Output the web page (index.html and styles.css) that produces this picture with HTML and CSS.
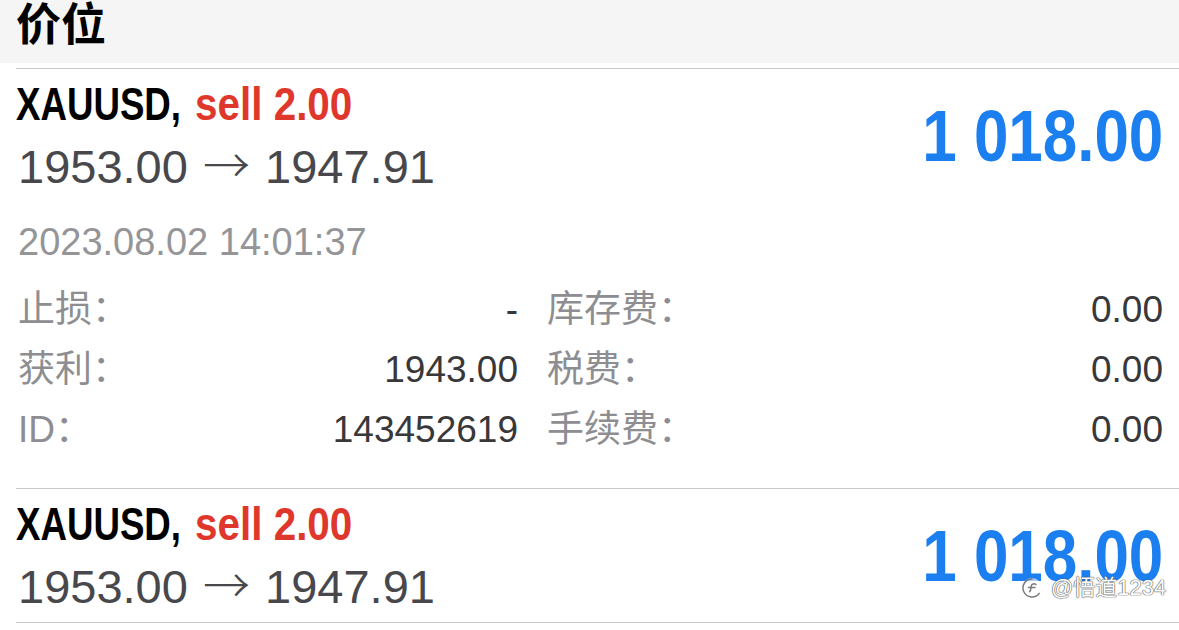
FILE: index.html
```html
<!DOCTYPE html>
<html lang="zh">
<head>
<meta charset="utf-8">
<title>价位</title>
<link rel="stylesheet" href="styles.css">
</head>
<body>
<div class="page">
  <header class="header"><h1 class="header-title">价位</h1></header>
  <div class="list">
    <section class="item">
      <div class="item-top">
        <div class="item-left">
          <div class="title"><span class="sym">XAUUSD,</span> <span class="sell">sell 2.00</span></div>
          <div class="prices">1953.00 <span class="arrow">→</span> 1947.91</div>
        </div>
        <div class="profit">1 018.00</div>
      </div>
      <div class="details">
        <div class="date">2023.08.02 14:01:37</div>
        <div class="grid">
          <div class="cell"><span class="label">止损：</span><span class="value">-</span></div>
          <div class="cell"><span class="label">库存费：</span><span class="value">0.00</span></div>
          <div class="cell"><span class="label">获利：</span><span class="value">1943.00</span></div>
          <div class="cell"><span class="label">税费：</span><span class="value">0.00</span></div>
          <div class="cell"><span class="label">ID：</span><span class="value">143452619</span></div>
          <div class="cell"><span class="label">手续费：</span><span class="value">0.00</span></div>
        </div>
      </div>
    </section>
    <section class="item item-last">
      <div class="item-top">
        <div class="item-left">
          <div class="title"><span class="sym">XAUUSD,</span> <span class="sell">sell 2.00</span></div>
          <div class="prices">1953.00 <span class="arrow">→</span> 1947.91</div>
        </div>
        <div class="profit">1 018.00</div>
      </div>
    </section>
  </div>
  <div class="watermark">
    <svg class="wm-icon" viewBox="0 0 24 24" width="24" height="24" aria-hidden="true">
      <circle cx="12" cy="12" r="10" fill="#ffffff" fill-opacity="0.6"/>
      <path d="M12 3a9 9 0 1 0 7.2 14.4" fill="none" stroke="#7a7a7a" stroke-width="1.5" stroke-linecap="round"/>
      <path d="M16 8.5c-1.6-1.2-4.2-0.8-4.8 1.4-0.5 1.8 0.2 4.4-1.6 5.8" fill="none" stroke="#7a7a7a" stroke-width="1.5" stroke-linecap="round"/>
      <path d="M8.5 11.5h6.5" fill="none" stroke="#7a7a7a" stroke-width="1.5" stroke-linecap="round"/>
    </svg>
    <span class="wm-text">@悟道1234</span>
  </div>
</div>
</body>
</html>
```
FILE: styles.css
```css
html, body {
  margin: 0;
  padding: 0;
  background: #ffffff;
}
body {
  font-family: "Liberation Sans", "Noto Sans CJK SC", sans-serif;
  color: #000;
}
.page {
  position: relative;
  width: 1179px;
  height: 630px;
  overflow: hidden;
}
.header {
  height: 63px;
  background: #f5f5f5;
  padding: 0 16px;
  display: flex;
  align-items: flex-start;
}
.header-title {
  margin: 0;
  font-family: "Noto Sans CJK SC", sans-serif;
  font-weight: 700;
  font-size: 45px;
  line-height: 44px;
  color: #000;
}
.list {
  margin-top: 5px;
  padding-left: 16px;
}
.item {
  border-top: 1px solid #c9c9cc;
}
.item-last {
  border-bottom: 1px solid #c9c9cc;
}
.item-top {
  display: flex;
  justify-content: space-between;
  align-items: center;
  padding: 10px 16px 10px 0;
}
.title {
  font-weight: 700;
  font-size: 47px;
  line-height: 50px;
  height: 50px;
  white-space: nowrap;
}
.sym {
  display: inline-block;
  color: #000;
  transform: scaleX(0.78);
  transform-origin: left center;
  margin-right: -46px;
}
.sell {
  display: inline-block;
  color: #e0372c;
  transform: scaleX(0.86);
  transform-origin: left center;
}
.prices {
  margin-top: 13px;
  margin-left: 2px;
  font-size: 47px;
  line-height: 50px;
  height: 50px;
  word-spacing: 2px;
  color: #48484c;
  white-space: nowrap;
}
.arrow {
  font-family: "Noto Sans CJK SC", sans-serif;
  font-weight: 300;
  line-height: 1px;
}
.profit {
  font-weight: 700;
  font-size: 72px;
  line-height: 80px;
  color: #1b7ff0;
  padding-top: 1px;
  white-space: nowrap;
  transform: scaleX(0.86);
  transform-origin: right center;
}
.details {
  padding: 18px 16px 28px 2px;
}
.date {
  font-size: 38px;
  line-height: 44px;
  color: #959598;
  white-space: nowrap;
}
.grid {
  margin-top: 16px;
  display: grid;
  grid-template-columns: 500px 1fr;
  column-gap: 29px;
}
.cell {
  display: flex;
  justify-content: space-between;
  align-items: baseline;
  height: 60px;
  line-height: 60px;
  font-size: 37px;
}
.label {
  color: #8e8e92;
}
.value {
  color: #38383b;
}
.watermark {
  position: absolute;
  left: 1020px;
  top: 573px;
  display: flex;
  align-items: center;
  gap: 7px;
  white-space: nowrap;
}
.wm-icon {
  display: block;
}
.wm-text {
  font-family: "Liberation Sans", "Noto Sans CJK SC", sans-serif;
  font-size: 22px;
  line-height: 30px;
  color: #ffffff;
  text-shadow: 0 0 1px #555, 0 0 1px #555, 0 0 1px #555;
}
```
